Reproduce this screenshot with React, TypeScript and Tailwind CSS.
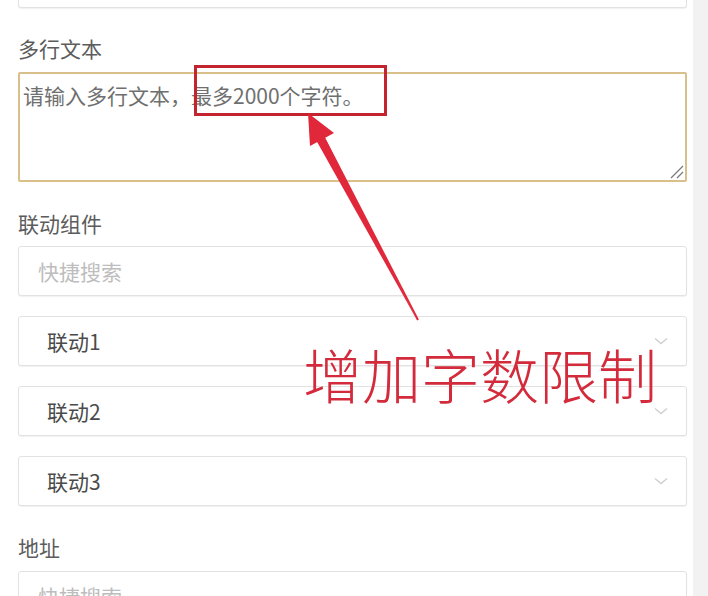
import React from "react";

const FONT = '"Noto Sans CJK SC", "Noto Sans", sans-serif';

function Chevron() {
  return (
    <svg width="14" height="8" viewBox="0 0 14 8" className="absolute right-[18px] top-1/2 -translate-y-1/2">
      <path d="M1 1.5 L7 6.5 L13 1.5" fill="none" stroke="#cfcfcf" strokeWidth="1.4" />
    </svg>
  );
}

function SelectBox({ label }: { label: string }) {
  return (
    <div className="relative mt-[20px] flex h-[50px] shrink-0 items-center rounded-[3px] border border-[#e2e2e2] bg-white pl-[28px] text-[21px] leading-[24px] text-[#4a4a4a] shadow-[0_1px_1px_rgba(0,0,0,0.06)]">
      {label}
      <Chevron />
    </div>
  );
}

function SearchBox({ className = "" }: { className?: string }) {
  return (
    <div className={"flex h-[50px] shrink-0 items-center rounded-[3px] border border-[#e2e2e2] bg-white pl-[19px] text-[21px] leading-[24px] text-[#bdbdbd] shadow-[0_1px_1px_rgba(0,0,0,0.06)] " + className}>
      快捷搜索
    </div>
  );
}

export default function App() {
  return (
    <div className="relative flex h-[596px] w-[708px] overflow-hidden bg-white" style={{ fontFamily: FONT }}>
      <div className="flex w-[693px] flex-col pl-[18px] pr-[6px]">
        <div className="h-[8px] shrink-0 rounded-b-[3px] border-x border-b border-[#e2e2e2] shadow-[0_1px_1px_rgba(0,0,0,0.06)]" />

        <div className="mt-[28px] h-[24px] shrink-0 text-[21px] leading-[24px] text-[#5c5c5c]">多行文本</div>
        <div className="relative mt-[12px] h-[110px] shrink-0 rounded-[2px] border-2 border-[#d9bf8a] bg-white pl-[3px] pt-[9px] text-[21px] leading-[24px] text-[#6f6f6f]">
          请输入多行文本，最多2000个字符。
          <svg width="16" height="16" viewBox="0 0 16 16" className="absolute bottom-[1px] right-[1px]">
            <path d="M3 15 L15 3" stroke="#7a7a7a" strokeWidth="1.2" />
            <path d="M9 15 L15 9" stroke="#7a7a7a" strokeWidth="1.2" />
          </svg>
        </div>

        <div className="mt-[29px] h-[24px] shrink-0 text-[21px] leading-[24px] text-[#5c5c5c]">联动组件</div>
        <SearchBox className="mt-[11px]" />
        <SelectBox label="联动1" />
        <SelectBox label="联动2" />
        <SelectBox label="联动3" />

        <div className="mt-[29px] h-[24px] shrink-0 text-[21px] leading-[24px] text-[#5c5c5c]">地址</div>
        <SearchBox className="mt-[12px]" />
      </div>
      <div className="w-[15px] bg-[#f2f2f2]" />

      {/* annotation: red box */}
      <div className="absolute left-[194px] top-[65px] h-[51px] w-[193px] border-[3px] border-[#c3242f]" />

      {/* annotation: arrow */}
      <svg className="pointer-events-none absolute left-0 top-0" width="708" height="596" viewBox="0 0 708 596">
        <path d="M417 320 L324 136 L316 140 Z" fill="#e0283a" />
        <path d="M418 320 L320 130" stroke="#e0283a" strokeWidth="2" />
        <path d="M308 113 L310 146 L334 133 Z" fill="#e0283a" />
      </svg>

      {/* annotation: text */}
      <div className="absolute left-[303px] top-[334px] whitespace-nowrap text-[59px] font-light leading-[80px] text-[#d32b3b]">
        增加字数限制
      </div>
    </div>
  );
}
